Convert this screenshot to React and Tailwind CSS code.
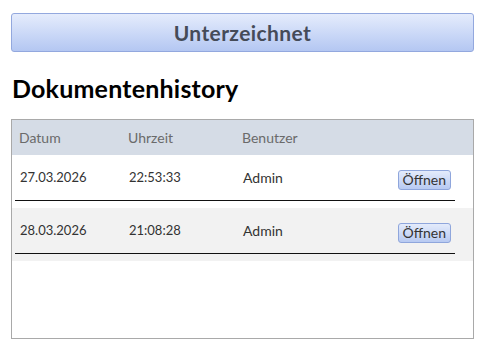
import React from "react";

const rows = [
  { date: "27.03.2026", time: "22:53:33", user: "Admin", bg: "bg-white" },
  { date: "28.03.2026", time: "21:08:28", user: "Admin", bg: "bg-[#f2f2f2]" },
];

function OpenButton() {
  return (
    <button className="h-[20px] px-[4px] rounded-[3px] border border-[#8fa6dc] bg-gradient-to-b from-[#e4ebfb] to-[#b8caf2] text-[14px] leading-none text-[#333]">
      Öffnen
    </button>
  );
}

export default function App() {
  return (
    <div className="w-[491px] h-[356px] bg-white pt-[13px] px-[11px] font-['Lato',sans-serif]">
      <div className="w-[463px] h-[39px] flex items-center justify-center rounded-[3px] border border-[#93a8de] bg-gradient-to-b from-[#e5ecfc] to-[#b4c7f2] text-[21px] tracking-[0.4px] font-bold text-[#454b58]">
        Unterzeichnet
      </div>

      <h2 className="mt-[21px] pl-[1px] text-[25px] leading-[30px] tracking-[0.2px] font-bold text-black">
        Dokumentenhistory
      </h2>

      <div className="mt-[16px] w-[463px] h-[220px] border border-[#a9a9a9]">
        <div className="h-[35px] bg-[#d5dce6] flex items-center text-[14px] text-[#6a6a6a]">
          <span className="pl-[7px] w-[116px]">Datum</span>
          <span className="w-[114px]">Uhrzeit</span>
          <span>Benutzer</span>
        </div>

        {rows.map((r) => (
          <div key={r.date} className={`${r.bg} pl-[3px] pr-[18px] pb-[7px]`}>
            <div className="h-[46px] flex items-center border-b border-[#111] pl-[5px] pr-[4px] text-[14px] text-[#333]">
              <span className="w-[109px] text-[13px]">{r.date}</span>
              <span className="w-[114px] text-[13px]">{r.time}</span>
              <span>{r.user}</span>
              <div className="ml-auto pt-[3px]">
                <OpenButton />
              </div>
            </div>
          </div>
        ))}
      </div>
    </div>
  );
}
